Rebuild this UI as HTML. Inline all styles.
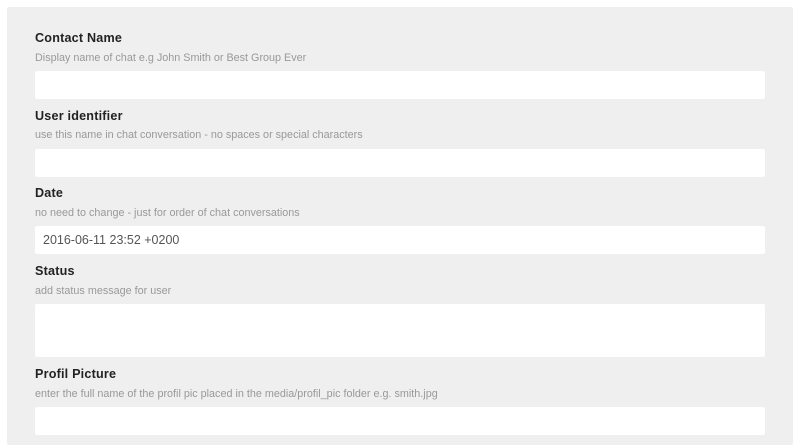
<!DOCTYPE html><html><head><style>
html,body{margin:0;width:800px;height:445px;overflow:hidden}
body{background:#fff;font-family:"Liberation Sans",sans-serif;position:relative}
.p{position:absolute;left:7px;top:7px;width:786px;height:438px;background:#efefef;border-radius:2px}
.l{position:absolute;left:35px;font-size:12.6px;font-weight:bold;color:#222;letter-spacing:0.2px}
.h{position:absolute;left:35px;font-size:10.8px;color:#999}
.i{position:absolute;left:35px;width:730px;background:#fff;border-radius:2px;font-size:12.5px;color:#555;box-sizing:border-box;padding-left:8px;line-height:28px}
</style></head><body><div class="p"></div>
<div class="l" style="top:31px">Contact Name</div>
<div class="h" style="top:52px">Display name of chat e.g John Smith or Best Group Ever</div>
<div class="i" style="top:71px;height:28px"></div>
<div class="l" style="top:109px">User identifier</div>
<div class="h" style="top:129px">use this name in chat conversation - no spaces or special characters</div>
<div class="i" style="top:149px;height:28px"></div>
<div class="l" style="top:186px">Date</div>
<div class="h" style="top:207px">no need to change - just for order of chat conversations</div>
<div class="i" style="top:226px;height:28px">2016-06-11 23:52 +0200</div>
<div class="l" style="top:264px">Status</div>
<div class="h" style="top:285px">add status message for user</div>
<div class="i" style="top:304px;height:53px"></div>
<div class="l" style="top:367px">Profil Picture</div>
<div class="h" style="top:388px">enter the full name of the profil pic placed in the media/profil_pic folder e.g. smith.jpg</div>
<div class="i" style="top:407px;height:28px"></div>
</body></html>
